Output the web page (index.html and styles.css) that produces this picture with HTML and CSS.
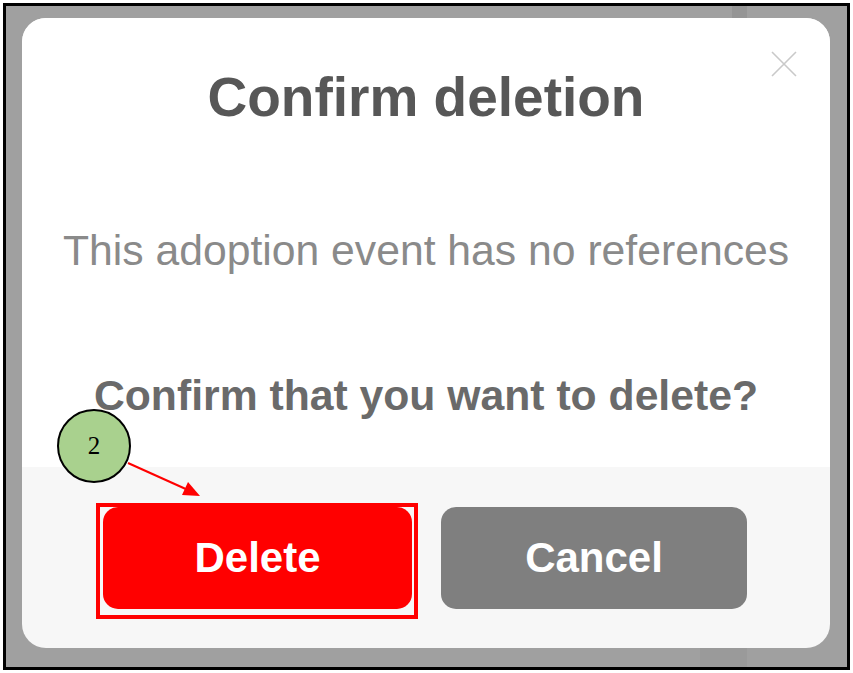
FILE: index.html
```html
<!DOCTYPE html>
<html lang="en">
<head>
<meta charset="utf-8">
<title>Confirm deletion</title>
<link rel="stylesheet" href="styles.css">
</head>
<body>
<div class="frame">
  <div class="stripe stripe-top"></div>
  <div class="stripe stripe-bottom"></div>
  <div class="modal">
    <div class="modal-body">
      <button class="close" aria-label="Close">
        <svg width="26" height="26" viewBox="0 0 26 26"><path d="M1 1 L25 25 M25 1 L1 25" stroke="#c9c9c9" stroke-width="1.6" fill="none"/></svg>
      </button>
      <h1 class="title">Confirm deletion</h1>
      <p class="message">This adoption event has no references</p>
      <p class="question">Confirm that you want to delete?</p>
    </div>
    <div class="modal-footer">
      <button class="btn btn-delete">Delete</button>
      <button class="btn btn-cancel">Cancel</button>
    </div>
  </div>
</div>
<div class="callout-box"></div>
<div class="callout-badge">2</div>
<svg class="callout-arrow" width="100" height="60" viewBox="0 0 100 60">
  <line x1="8" y1="13" x2="68" y2="40" stroke="#ff0000" stroke-width="2"/>
  <polygon points="80,46 62,45 68,32" fill="#ff0000"/>
</svg>
</body>
</html>
```
FILE: styles.css
```css
html, body {
  margin: 0;
  padding: 0;
  background: #ffffff;
}
body {
  position: relative;
  width: 853px;
  height: 673px;
  font-family: "Liberation Sans", Arial, sans-serif;
}
.frame {
  position: relative;
  box-sizing: border-box;
  margin: 3px 0 0 3px;
  width: 847px;
  height: 667px;
  border: 3px solid #000;
  background: #a0a0a0;
  padding: 12px 0 0 16px;
}
.stripe {
  position: absolute;
  background: #959595;
}
.stripe-top {
  left: 726px;
  top: 0;
  width: 15px;
  height: 14px;
}
.stripe-bottom {
  left: 694px;
  bottom: 0;
  width: 47px;
  height: 20px;
  background: #9a9a9a;
}
.modal {
  position: relative;
  width: 808px;
  height: 630px;
  background: #f7f7f7;
  border-radius: 24px;
  overflow: hidden;
  display: flex;
  flex-direction: column;
}
.modal-body {
  position: relative;
  background: #ffffff;
  height: 449px;
  box-sizing: border-box;
  padding-top: 52px;
  text-align: center;
}
.close {
  position: absolute;
  top: 33px;
  right: 33px;
  padding: 0;
  border: 0;
  background: none;
  width: 26px;
  height: 26px;
}
.close svg { display: block; }
.title {
  margin: 0;
  font-size: 55px;
  line-height: 1;
  font-weight: bold;
  color: #575757;
}
.message {
  margin: 104px 0 0;
  font-size: 42.7px;
  line-height: 1;
  color: #8a8a8a;
}
.question {
  margin: 102px 0 0;
  font-size: 42.7px;
  line-height: 1;
  font-weight: bold;
  color: #6a6a6a;
}
.modal-footer {
  flex: 1;
  display: flex;
  justify-content: center;
  align-items: flex-start;
  gap: 29px;
  padding-top: 40px;
  padding-right: 2px;
}
.btn {
  height: 102px;
  border: 0;
  border-radius: 15px;
  font-family: "Liberation Sans", Arial, sans-serif;
  font-size: 42px;
  font-weight: bold;
  color: #ffffff;
  display: flex;
  align-items: center;
  justify-content: center;
  padding: 0;
}
.btn-delete { background: #ff0000; width: 309px; }
.btn-cancel { background: #7f7f7f; width: 306px; }
.callout-box {
  position: absolute;
  left: 96px;
  top: 503px;
  width: 322px;
  height: 116px;
  box-sizing: border-box;
  border: 4px solid #ff0000;
}
.callout-badge {
  position: absolute;
  left: 57px;
  top: 409px;
  width: 74px;
  height: 74px;
  box-sizing: border-box;
  border: 2px solid #000;
  border-radius: 50%;
  background: #a9d18e;
  font-family: "Liberation Serif", "Times New Roman", serif;
  font-size: 25px;
  color: #000;
  display: flex;
  align-items: center;
  justify-content: center;
}
.callout-arrow {
  position: absolute;
  left: 120px;
  top: 450px;
  overflow: visible;
}
```
